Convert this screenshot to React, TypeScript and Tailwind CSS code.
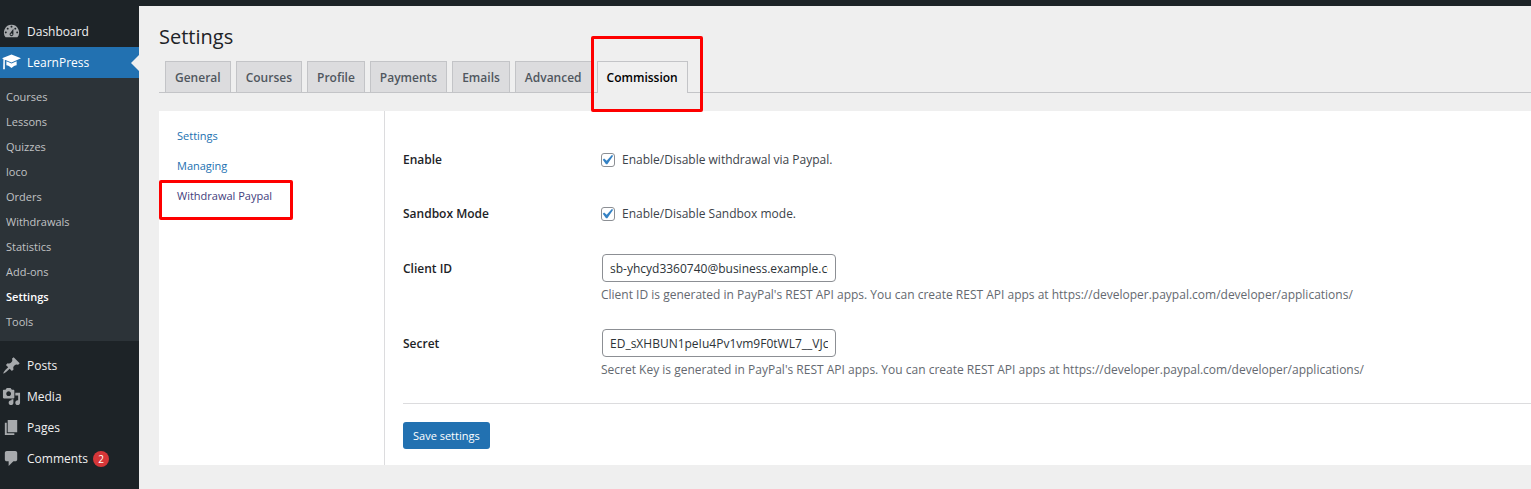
import type { ReactNode } from "react";

const icons = {
  dashboard:
    "M3.76 16h12.48A7.998 7.998 0 0 0 10 3a7.998 7.998 0 0 0-6.24 13zM10 4c.55 0 1 .45 1 1s-.45 1-1 1-1-.45-1-1 .45-1 1-1zM6 6c.55 0 1 .45 1 1s-.45 1-1 1-1-.45-1-1 .45-1 1-1zm8 0c.55 0 1 .45 1 1s-.45 1-1 1-1-.45-1-1 .45-1 1-1zm-5.37 5.55L12 7v6c0 1.1-.9 2-2 2s-2-.9-2-2c0-.57.24-1.08.63-1.45zM4 10c.55 0 1 .45 1 1s-.45 1-1 1-1-.45-1-1 .45-1 1-1zm12 0c.55 0 1 .45 1 1s-.45 1-1 1-1-.45-1-1 .45-1 1-1zm-5 3c0-.55-.45-1-1-1s-1 .45-1 1 .45 1 1 1 1-.45 1-1z",
  learn:
    "M10 1.5L20 5.6 10 10 3 7.1V17.2H1.2L1.5 6.4 0 5.6zM4.6 8.7L10 11l5.4-2.3v4.1c-1.7.2-3.6 1.2-5.4 3-1.8-1.8-3.700-2.800-5.400-3z",
  post: "M10.44 3.02l1.82-1.82 6.36 6.35-1.83 1.82c-1.05-.68-2.48-.57-3.41.36l-.75.75c-.92.93-1.04 2.35-.35 3.41l-1.83 1.82-2.41-2.41-2.8 2.79c-.42.42-3.38 2.71-3.8 2.29s1.86-3.39 2.28-3.81l2.79-2.79L4.1 9.36l1.83-1.82c1.05.69 2.48.57 3.4-.36l.75-.75c.93-.92 1.05-2.35.36-3.41z",
  media:
    "M13 11V4c0-.55-.45-1-1-1h-1.67L9 1H5L3.67 3H2c-.55 0-1 .45-1 1v7c0 .55.45 1 1 1h10c.55 0 1-.45 1-1zM7 4.5c1.38 0 2.5 1.12 2.5 2.5S8.38 9.5 7 9.5 4.5 8.38 4.5 7 5.62 4.5 7 4.5zM14 6h5v10.5c0 1.38-1.12 2.5-2.5 2.5S14 17.88 14 16.5s1.12-2.5 2.5-2.5c.17 0 .34.02.5.05V9h-3V6zm-4 8.05V13h2v3.5c0 1.38-1.12 2.5-2.5 2.5S7 17.88 7 16.5 8.12 14 9.5 14c.17 0 .34.02.5.05z",
  page: "M6 15V2h10v13H6zm-1 1h8v2H3V5h2v11z",
  comment: "M5 2h9c1.1 0 2 .9 2 2v7c0 1.1-.9 2-2 2h-2l-5 5v-5H5c-1.1 0-2-.9-2-2V4c0-1.1.9-2 2-2z",
};

const submenu = [
  "Courses",
  "Lessons",
  "Quizzes",
  "loco",
  "Orders",
  "Withdrawals",
  "Statistics",
  "Add-ons",
  "Settings",
  "Tools",
];

const tabs = ["General", "Courses", "Profile", "Payments", "Emails", "Advanced", "Commission"];

function MenuItem({
  icon,
  label,
  current,
  children,
}: {
  icon: keyof typeof icons;
  label: string;
  current?: boolean;
  children?: ReactNode;
}) {
  return (
    <a
      href="#"
      aria-current={current ? "page" : undefined}
      className={`relative flex h-[31px] items-center pl-0.5 text-[12px] ${
        current ? "bg-[#2271b1] text-white" : "text-[#f0f0f1]"
      }`}
    >
      <svg
        viewBox="0 0 20 20"
        aria-hidden="true"
        className={`mr-1.5 size-[19px] shrink-0 ${current ? "fill-white" : "fill-[#a7aaad]"}`}
      >
        <path d={icons[icon]} />
      </svg>
      {label}
      {children}
    </a>
  );
}

function Highlight({ className }: { className: string }) {
  return (
    <span
      aria-hidden="true"
      className={`pointer-events-none absolute rounded-[2px] border-3 border-[#fe0000] ${className}`}
    />
  );
}

function CheckRow({ id, title, text }: { id: string; title: string; text: string }) {
  return (
    <div className="flex h-[54px] items-center">
      <div className="w-[198px] shrink-0 font-semibold text-[#1d2327]">{title}</div>
      <label htmlFor={id} className="flex items-center gap-[7px]">
        <span className="relative flex">
          <input
            id={id}
            type="checkbox"
            defaultChecked
            className="peer size-[14px] appearance-none rounded-[3px] border border-[#8c8f94] bg-white"
          />
          <svg
            viewBox="0 0 20 20"
            aria-hidden="true"
            className="pointer-events-none absolute -top-[3px] -left-1 hidden size-5 fill-[#3582c4] peer-checked:block"
          >
            <path d="M14.83 4.89l1.34.94-5.81 8.38H9.02L5.78 9.67l1.34-1.25 2.57 2.4z" />
          </svg>
        </span>
        {text}
      </label>
    </div>
  );
}

function TextRow({ id, title, value, hint }: { id: string; title: string; value: string; hint: string }) {
  return (
    <div className="flex h-[75px] items-start pt-[13px]">
      <label htmlFor={id} className="w-[198px] shrink-0 pt-1.5 font-semibold text-[#1d2327]">
        {title}
      </label>
      <div className="min-w-0">
        <input
          id={id}
          type="text"
          defaultValue={value}
          className="ml-px block h-7 w-[234px] rounded-[4px] border border-[#8c8f94] bg-white px-[7px] text-[#2c3338]"
        />
        <p className="mt-1 whitespace-nowrap text-[#646970]">{hint}</p>
      </div>
    </div>
  );
}

export default function App() {
  return (
    <div className="flex min-h-screen flex-col bg-[#efefef] font-['Open_Sans','Noto_Sans',sans-serif] text-[12px] leading-[18px] text-[#3c434a]">
      <header className="h-1.5 bg-[#1d2327]" />
      <div className="flex grow">
        <nav aria-label="Main menu" className="w-[139px] shrink-0 bg-[#1d2327] pt-2.5">
          <MenuItem icon="dashboard" label="Dashboard" />
          <MenuItem icon="learn" label="LearnPress" current>
            <span
              aria-hidden="true"
              className="absolute top-2 right-0 border-y-8 border-r-8 border-y-transparent border-r-[#efefef]"
            />
          </MenuItem>
          <ul className="bg-[#2c3338] pt-1.5 pb-[7px] text-[11px]">
            {submenu.map((item) => (
              <li key={item}>
                <a
                  href="#"
                  className={`flex h-[25px] items-center pl-1.5 ${
                    item === "Settings" ? "font-semibold text-white" : "text-[#c0c2c4]"
                  }`}
                >
                  {item}
                </a>
              </li>
            ))}
          </ul>
          <div className="pt-[9px]">
            <MenuItem icon="post" label="Posts" />
            <MenuItem icon="media" label="Media" />
            <MenuItem icon="page" label="Pages" />
            <MenuItem icon="comment" label="Comments">
              <span className="ml-[5px] flex size-4 items-center justify-center rounded-full bg-[#d63638] text-[10px] text-white">
                2
              </span>
            </MenuItem>
          </div>
        </nav>

        <main className="min-w-0 grow pl-5">
          <h1 className="pt-4 text-[20px] leading-[30px] text-[#1d2327]">Settings</h1>
          <div className="mt-[9px] flex items-end gap-[5px] border-b border-[#c3c4c7] pl-1.5">
            {tabs.map((tab) => {
              const active = tab === "Commission";
              return (
                <a
                  key={tab}
                  href="#"
                  aria-current={active ? "page" : undefined}
                  className={`relative border border-b-0 border-[#c3c4c7] px-[9px] text-[12px] font-semibold ${
                    active
                      ? "-mb-px h-8 bg-[#efefef] leading-[31px] text-black"
                      : "h-[31px] bg-[#dcdcde] leading-[31px] text-[#50575e]"
                  }`}
                >
                  {tab}
                  {active && <Highlight className="-top-[26px] -right-4 -bottom-[19px] -left-[7px]" />}
                </a>
              );
            })}
          </div>

          <div className="mt-[18px] flex bg-white">
            <ul className="w-[226px] shrink-0 space-y-3 border-r border-[#dcdcde] pt-4 pl-[18px] text-[11px]">
              <li>
                <a href="#" className="block text-[#2271b1]">
                  Settings
                </a>
              </li>
              <li>
                <a href="#" className="block text-[#2271b1]">
                  Managing
                </a>
              </li>
              <li>
                <a href="#" className="relative inline-block text-[#43407d]">
                  Withdrawal Paypal
                  <Highlight className="-top-[7px] -right-[21px] -bottom-[15px] -left-[18px]" />
                </a>
              </li>
            </ul>
            <form className="min-w-0 grow pt-[22px] pb-4 pl-[18px]" onSubmit={(e) => e.preventDefault()}>
              <CheckRow id="enable" title="Enable" text="Enable/Disable withdrawal via Paypal." />
              <CheckRow id="sandbox" title="Sandbox Mode" text="Enable/Disable Sandbox mode." />
              <TextRow
                id="client-id"
                title="Client ID"
                value="sb-yhcyd3360740@business.example.com"
                hint="Client ID is generated in PayPal's REST API apps. You can create REST API apps at https://developer.paypal.com/developer/applications/"
              />
              <TextRow
                id="secret"
                title="Secret"
                value="ED_sXHBUN1peIu4Pv1vm9F0tWL7__VJcQx"
                hint="Secret Key is generated in PayPal's REST API apps. You can create REST API apps at https://developer.paypal.com/developer/applications/"
              />
              <hr className="mt-3 border-[#dcdcde]" />
              <button
                type="submit"
                className="mt-[18px] block h-[27px] rounded-[3px] bg-[#2271b1] px-2.5 text-[11px] text-white"
              >
                Save settings
              </button>
            </form>
          </div>
        </main>
      </div>
    </div>
  );
}
